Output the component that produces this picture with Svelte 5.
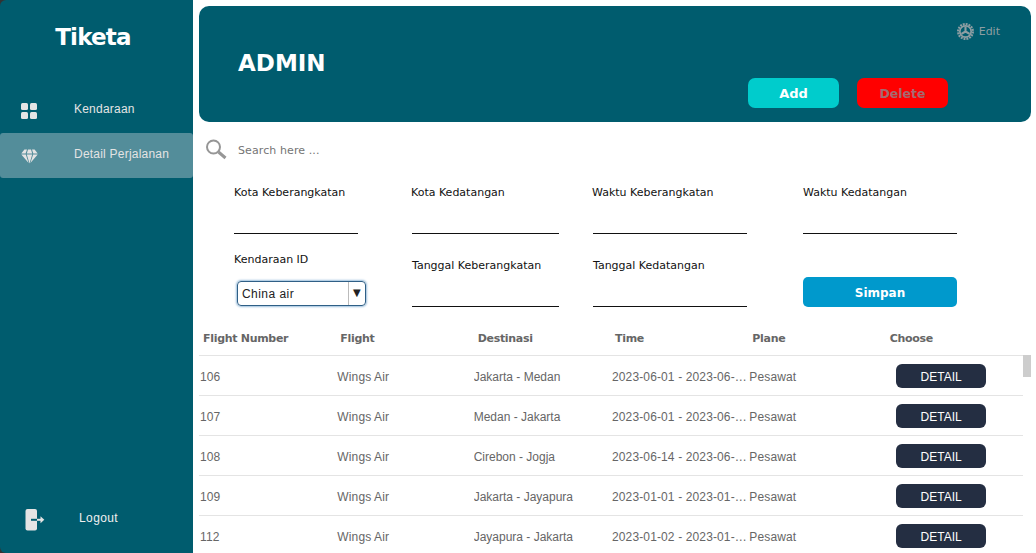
<script lang="ts">
  const flights = [
    { no: 106, name: 'Wings Air', dest: 'Jakarta - Medan', time: '2023-06-01 - 2023-06-02', plane: 'Pesawat' },
    { no: 107, name: 'Wings Air', dest: 'Medan - Jakarta', time: '2023-06-01 - 2023-06-02', plane: 'Pesawat' },
    { no: 108, name: 'Wings Air', dest: 'Cirebon - Jogja', time: '2023-06-14 - 2023-06-15', plane: 'Pesawat' },
    { no: 109, name: 'Wings Air', dest: 'Jakarta - Jayapura', time: '2023-01-01 - 2023-01-02', plane: 'Pesawat' },
    { no: 112, name: 'Wings Air', dest: 'Jayapura - Jakarta', time: '2023-01-02 - 2023-01-03', plane: 'Pesawat' },
  ];
</script>

<div class="page">
  <aside class="sidebar">
    <div class="logo">Tiketa</div>
    <nav class="menu">
      <div class="menu-item">
        <svg class="menu-icon" width="16" height="16" viewBox="0 0 16 16">
          <rect x="0" y="0" width="7" height="7" rx="1.5" />
          <rect x="9" y="0" width="7" height="7" rx="1.5" />
          <rect x="0" y="9" width="7" height="7" rx="1.5" />
          <rect x="9" y="9" width="7" height="7" rx="1.5" />
        </svg>
        <span>Kendaraan</span>
      </div>
      <div class="menu-item active">
        <svg class="menu-icon" width="17" height="16" viewBox="0 0 17 16">
          <path d="M3.4 1.500H6L4.600 5.500H0.300zM7 1.500h3l1.200 4H5.800zM11 1.500h2.600l3.100 4h-4.400zM0.300 6.500h4.500l2.800 8.500zM5.800 6.500h5.400L8.500 15.500zM12.200 6.500h4.500l-7.300 8.500z" />
        </svg>
        <span>Detail Perjalanan</span>
      </div>
    </nav>
    <div class="logout">
      <svg width="20" height="22" viewBox="0 0 20 22">
        <rect x="0.500" y="0" width="11.500" height="21.500" rx="2" fill="#e4e4e4" />
        <path d="M6 10.800h6" stroke="#005c6e" stroke-width="2" />
        <path d="M12 10.800h4" stroke="#e4e4e4" stroke-width="2" />
        <path d="M15.500 7.300l3.800 3.500-3.800 3.500z" fill="#e4e4e4" />
      </svg>
      <span>Logout</span>
    </div>
  </aside>

  <main class="content">
    <header class="banner">
      <div class="edit">
        <svg width="17" height="17" viewBox="0 0 18 18" fill="none" stroke="#8e9ea3">
          <circle cx="9" cy="9" r="7.800" stroke-width="2.400" stroke-dasharray="2 1.060" />
          <circle cx="9" cy="9" r="6" stroke-width="1.800" />
          <path d="M9 9V4M9 9l4.300 2.500M9 9l-4.300 2.500" stroke-width="2.200" />
        </svg>
        <span>Edit</span>
      </div>
      <h1>ADMIN</h1>
      <div class="banner-actions">
        <button class="btn add">Add</button>
        <button class="btn delete">Delete</button>
      </div>
    </header>

    <div class="search">
      <svg width="22" height="22" viewBox="0 0 22 22" fill="none" stroke="#969696">
        <circle cx="8.500" cy="8" r="6.500" stroke-width="2" />
        <path d="M13.500 13l7 6" stroke-width="3" />
      </svg>
      <span>Search here ...</span>
    </div>

    <form class="form">
      <div class="col c1">
        <div class="field">
          <label for="kb">Kota Keberangkatan</label>
          <input id="kb" />
        </div>
        <div class="field vehicle">
          <label for="kid">Kendaraan ID</label>
          <div class="select" id="kid">
            <span>China air</span>
            <i>▼</i>
          </div>
        </div>
      </div>
      <div class="col c2">
        <div class="field">
          <label for="kd">Kota Kedatangan</label>
          <input id="kd" />
        </div>
        <div class="field lower">
          <label for="tb">Tanggal Keberangkatan</label>
          <input id="tb" />
        </div>
      </div>
      <div class="col c3">
        <div class="field">
          <label for="wb">Waktu Keberangkatan</label>
          <input id="wb" />
        </div>
        <div class="field lower">
          <label for="td">Tanggal Kedatangan</label>
          <input id="td" />
        </div>
      </div>
      <div class="col c4">
        <div class="field">
          <label for="wd">Waktu Kedatangan</label>
          <input id="wd" />
        </div>
        <button type="button" class="save">Simpan</button>
      </div>
    </form>

    <div class="table-wrap">
      <table>
        <thead>
          <tr>
            <th>Flight Number</th>
            <th>Flight</th>
            <th>Destinasi</th>
            <th>Time</th>
            <th>Plane</th>
            <th>Choose</th>
          </tr>
        </thead>
        <tbody>
          {#each flights as f}
            <tr>
              <td>{f.no}</td>
              <td>{f.name}</td>
              <td class="dest">{f.dest}</td>
              <td>{f.time}</td>
              <td>{f.plane}</td>
              <td class="action"><button class="detail">DETAIL</button></td>
            </tr>
          {/each}
        </tbody>
      </table>
      <div class="thumb"></div>
    </div>
  </main>
</div>

<style>
  :global(body) {
    margin: 0;
    background: #fff;
  }

  .page {
    display: flex;
    width: 1036px;
    height: 553px;
    overflow: hidden;
    background: #333;
  }

  /* sidebar */
  .sidebar {
    width: 193px;
    flex-shrink: 0;
    height: 553px;
    box-sizing: border-box;
    display: flex;
    flex-direction: column;
    background: #005c6e;
    border-radius: 6px 0 0 6px;
    color: #fff;
  }
  .logo {
    font: bold 23px "DejaVu Sans", sans-serif;
    letter-spacing: -0.8px;
    text-align: center;
    padding: 24px 7px 0 0;
    height: 66px;
    box-sizing: border-box;
  }
  .menu {
    margin-top: 22px;
  }
  .menu-item {
    display: flex;
    align-items: center;
    height: 45px;
    padding-left: 21px;
    border-radius: 3px;
    font: 12px "Liberation Sans", sans-serif;
    letter-spacing: 0.22px;
    color: #e4e4e4;
  }
  .menu-item span {
    position: relative;
    top: -2px;
    margin-left: 37px;
  }
  .menu-item.active span {
    margin-left: 36px;
  }
  .menu-icon {
    fill: #e4e4e4;
    flex-shrink: 0;
  }
  .menu-item.active {
    background: #538d9a;
  }
  .logout {
    margin-top: auto;
    margin-bottom: 22px;
    display: flex;
    align-items: center;
    padding-left: 25px;
    font: 12px "Liberation Sans", sans-serif;
    letter-spacing: 0.4px;
    color: #f0f0f0;
  }
  .logout span {
    margin-left: 34px;
    margin-top: -4px;
  }

  /* main */
  .content {
    flex: 1;
    min-width: 0;
    padding: 6px 5px 0 6px;
    background: #fff;
  }
  .banner {
    position: relative;
    height: 116px;
    box-sizing: border-box;
    padding: 44px 39px 0;
    background: #005c6e;
    border-radius: 10px;
  }
  .banner h1 {
    margin: 0;
    font: bold 23px "DejaVu Sans", sans-serif;
    color: #fff;
  }
  .edit {
    position: absolute;
    top: 17px;
    right: 31px;
    display: flex;
    align-items: center;
    gap: 5px;
    font: 11px "DejaVu Sans", sans-serif;
    color: #8e9ea3;
  }
  .banner-actions {
    position: absolute;
    left: 549px;
    top: 72px;
    display: flex;
    gap: 18px;
  }
  .btn {
    width: 91px;
    height: 30px;
    border: none;
    border-radius: 7px;
    font: bold 13px "DejaVu Sans", sans-serif;
    padding: 0;
  }
  .btn.add {
    background: #00cccc;
    color: #fff;
  }
  .btn.delete {
    background: #ff0000;
    color: #a56a70;
    font-size: 12.5px;
  }

  .search {
    display: flex;
    align-items: center;
    height: 22px;
    margin-top: 17px;
    padding-left: 6px;
    font: 11px "DejaVu Sans", sans-serif;
    letter-spacing: 0.1px;
    color: #757575;
  }
  .search span {
    margin-left: 11px;
  }

  .form {
    display: flex;
    height: 153px;
    padding-left: 35px;
    margin-top: 8px;
    font: 11px "DejaVu Sans", sans-serif;
    color: #111;
  }
  .col {
    display: flex;
    flex-direction: column;
  }
  .c1 { width: 177px; }
  .c2 { width: 181px; }
  .c3 { width: 210px; }
  .c4 { width: 155px; }
  .field {
    display: flex;
    flex-direction: column;
  }
  .field label {
    line-height: 14px;
    height: 14px;
    margin-top: 17px;
  }
  .field input {
    border: none;
    border-bottom: 1px solid #111;
    outline: none;
    box-sizing: border-box;
    height: 27px;
    padding: 0;
    margin-top: 7px;
  }
  .c1 .field input { width: 124px; }
  .c2 .field input { width: 147px; margin-left: 1px; }
  .c3 .field input { width: 154px; margin-left: 1px; }
  .c4 .field input { width: 154px; margin-left: 1px; }
  .lower {
    margin-top: 8px;
  }
  .lower label {
    margin-left: 1px;
  }
  .c4 label {
    margin-left: 1px;
  }
  .vehicle {
    margin-top: 2px;
  }
  .select {
    box-sizing: border-box;
    width: 129px;
    height: 25px;
    margin: 14px 0 0 3px;
    display: flex;
    align-items: center;
    border: 1.500px solid #2f5f86;
    border-radius: 4px;
    box-shadow: 0 0 2px 1px #9dbfdc;
    font: 12px "Liberation Sans", sans-serif;
    letter-spacing: 0.45px;
    color: #222;
    padding-left: 4px;
  }
  .select span {
    flex: 1;
  }
  .select i {
    width: 16px;
    height: 100%;
    font: normal 10px/21px "DejaVu Sans", sans-serif;
    text-align: center;
    border-left: 1px solid #bbb;
  }
  .save {
    width: 154px;
    height: 30px;
    margin: 43px 0 0 1px;
    border: none;
    border-radius: 5px;
    background: #0099cc;
    color: #fff;
    font: bold 12px "DejaVu Sans", sans-serif;
    padding: 2px 0 0;
  }

  /* table */
  .table-wrap {
    position: relative;
    width: 832px;
    padding-right: 8px;
    box-sizing: border-box;
  }
  table {
    width: 824px;
    table-layout: fixed;
    border-collapse: collapse;
  }
  th {
    height: 33px;
    padding: 0 0 0 4px;
    text-align: left;
    font: bold 11px "DejaVu Sans", sans-serif;
    letter-spacing: -0.3px;
    color: #666;
    border-bottom: 1px solid #e4e4e4;
  }
  td {
    height: 40px;
    padding: 2px 0 0 1px;
    box-sizing: border-box;
    font: 12px "Liberation Sans", sans-serif;
    letter-spacing: 0.13px;
    color: #666;
    border-bottom: 1px solid #e4e4e4;
    white-space: nowrap;
    overflow: hidden;
    text-overflow: ellipsis;
  }
  td.dest {
    padding-left: 0;
    letter-spacing: 0;
  }
  td.action {
    padding-top: 0;
  }
  .detail {
    display: block;
    width: 90px;
    height: 24px;
    margin-left: 9px;
    padding: 2px 0 0 1px;
    border: none;
    border-radius: 6px;
    background: #242e42;
    color: #fff;
    font: 12px "Liberation Sans", sans-serif;
  }
  .thumb {
    position: absolute;
    top: 33px;
    right: 0;
    width: 8px;
    height: 22px;
    background: #cdcdcd;
  }
</style>
